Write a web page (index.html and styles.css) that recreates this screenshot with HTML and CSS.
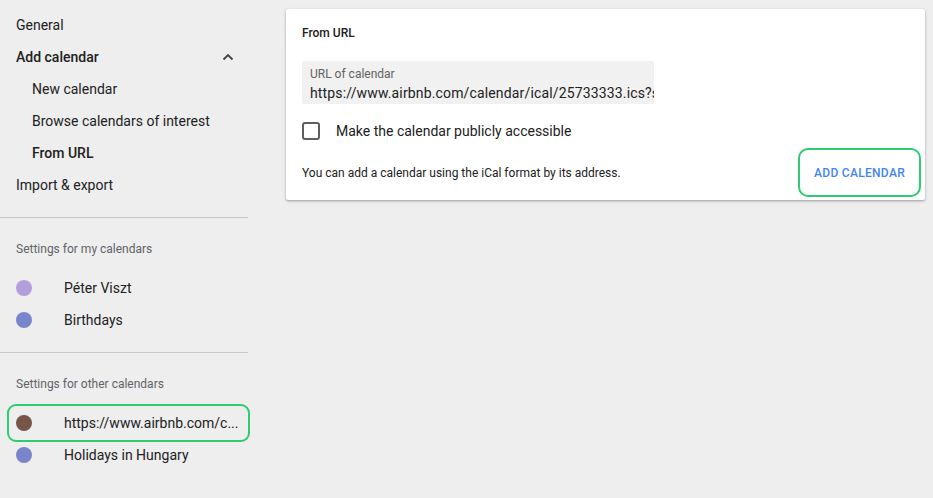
FILE: index.html
```html
<!DOCTYPE html>
<html lang="en">
<head>
  <meta charset="UTF-8" />
  <title>Settings - Add calendar from URL</title>
  <meta name="viewport" content="width=device-width, initial-scale=1.0" />
  <link rel="stylesheet" href="styles.css">
</head>
<body>
  <nav class="sidebar">
    <ul class="menu">
      <li class="item">General</li>
      <li class="item item-strong">
        <span>Add calendar</span>
        <svg class="chevron" width="12" height="8" viewBox="0 0 12 8"><path d="M1.5 6.5 L6 2 L10.5 6.5" fill="none" stroke="#444" stroke-width="1.8"/></svg>
      </li>
      <li class="item sub">New calendar</li>
      <li class="item sub">Browse calendars of interest</li>
      <li class="item sub item-strong">From URL</li>
      <li class="item">Import &amp; export</li>
    </ul>

    <section class="group">
      <h3 class="group-title">Settings for my calendars</h3>
      <div class="cal"><span class="dot purple"></span><span class="cal-name">Péter Viszt</span></div>
      <div class="cal"><span class="dot blue"></span><span class="cal-name">Birthdays</span></div>
    </section>

    <section class="group">
      <h3 class="group-title">Settings for other calendars</h3>
      <div class="cal highlighted"><span class="dot brown"></span><span class="cal-name">https://www.airbnb.com/c...</span></div>
      <div class="cal"><span class="dot blue"></span><span class="cal-name">Holidays in Hungary</span></div>
    </section>
  </nav>

  <main class="content">
    <div class="card">
      <h2 class="card-title">From URL</h2>

      <div class="field">
        <label class="field-label">URL of calendar</label>
        <div class="field-value">https://www.airbnb.com/calendar/ical/25733333.ics?s</div>
      </div>

      <div class="check-row">
        <span class="checkbox"></span>
        <span>Make the calendar publicly accessible</span>
      </div>

      <div class="card-footer">
        <p class="hint">You can add a calendar using the iCal format by its address.</p>
        <button class="add-btn">ADD CALENDAR</button>
      </div>
    </div>
  </main>
</body>
</html>
```

FILE: styles.css
```css
* {
  box-sizing: border-box;
  margin: 0;
  padding: 0;
}

body {
  font-family: Roboto, 'Liberation Sans', sans-serif;
  background: #eeeeee;
  color: #212121;
  display: flex;
  width: 933px;
  height: 498px;
  overflow: hidden;
}

.sidebar {
  width: 248px;
  flex-shrink: 0;
  padding-top: 9px;
}

.menu {
  list-style: none;
  padding-bottom: 16px;
  border-bottom: 1px solid #c9c9c9;
}

.item {
  height: 32px;
  display: flex;
  align-items: center;
  justify-content: space-between;
  padding: 0 14px 0 16px;
  font-size: 14px;
}

.item.sub {
  padding-left: 32px;
}

.item-strong {
  font-weight: 500;
}

.chevron {
  display: block;
}

.group {
  padding-bottom: 16px;
  border-bottom: 1px solid #c9c9c9;
}

.group:last-child {
  border-bottom: none;
}

.group-title {
  font-size: 12px;
  font-weight: 400;
  color: #5f6368;
  line-height: 20px;
  padding: 21px 16px 0;
  margin-bottom: 13px;
}

.cal {
  position: relative;
  height: 32px;
  display: flex;
  align-items: center;
  padding-left: 16px;
  padding-right: 8px;
  font-size: 14px;
}

.dot {
  width: 16px;
  height: 16px;
  border-radius: 50%;
  flex-shrink: 0;
  margin-right: 32px;
}

.purple { background: #b39ddb; }
.blue { background: #7986cb; }
.brown { background: #795548; }

.cal-name {
  white-space: nowrap;
}

.highlighted::after {
  content: '';
  position: absolute;
  left: 7px;
  right: -2px;
  top: -3px;
  bottom: -3px;
  border: 2px solid #2ecc71;
  border-radius: 9px;
}

.content {
  padding: 9px 0 0 38px;
}

.card {
  width: 639px;
  height: 191px;
  background: #fff;
  border-radius: 2px;
  box-shadow: 0 1px 3px rgba(0, 0, 0, 0.25), 0 1px 2px rgba(0, 0, 0, 0.12);
  padding: 17px 4px 3px 16px;
}

.card-title {
  font-size: 12px;
  font-weight: 500;
  line-height: 14px;
  margin-bottom: 21px;
}

.field {
  width: 352px;
  height: 43px;
  background: #f1f1f1;
  border-radius: 2px;
  padding: 6px 0 0 8px;
  overflow: hidden;
}

.field-label {
  display: block;
  font-size: 12px;
  line-height: 14px;
  color: #616161;
  margin-bottom: 2px;
}

.field-value {
  font-size: 14px;
  letter-spacing: 0.15px;
  line-height: 20px;
  white-space: nowrap;
  overflow: hidden;
}

.check-row {
  display: flex;
  align-items: center;
  height: 32px;
  margin-top: 11px;
  font-size: 14px;
}

.checkbox {
  width: 18px;
  height: 18px;
  border: 2px solid #5f5f5f;
  border-radius: 3px;
  margin-right: 16px;
}

.card-footer {
  display: flex;
  align-items: center;
  justify-content: space-between;
  margin-top: 1px;
}

.hint {
  font-size: 12px;
  padding-top: 1px;
}

.add-btn {
  width: 123px;
  height: 49px;
  border: 2px solid #2ecc71;
  border-radius: 10px;
  background: #fff;
  color: #4285f4;
  font-family: inherit;
  font-size: 12px;
  font-weight: 500;
  letter-spacing: 0.3px;
  padding-top: 1px;
  cursor: pointer;
}
```
